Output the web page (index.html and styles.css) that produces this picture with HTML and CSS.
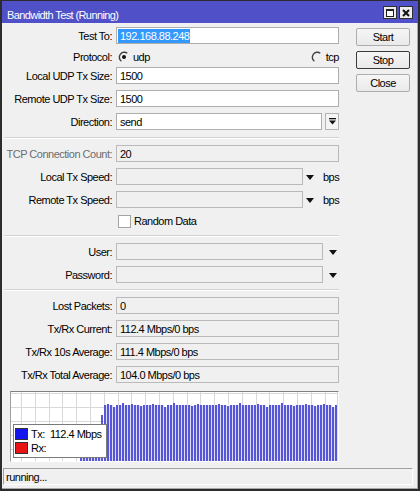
FILE: index.html
```
<!DOCTYPE html>
<html>
<head>
<meta charset="utf-8">
<link rel="stylesheet" href="styles.css">
</head>
<body>
<div class="window">
  <div class="titlebar">
    <span class="title">Bandwidth Test (Running)</span>
    <div class="tb-buttons">
      <span class="tb-btn"><span class="max-icon"></span></span>
      <span class="tb-btn"><svg width="8" height="8" viewBox="0 0 8 8"><path d="M1 1L7 7M7 1L1 7" stroke="#111" stroke-width="2"/></svg></span>
    </div>
  </div>
  <div class="main">
    <div class="form">
      <div class="row">
        <span class="lbl">Test To:</span>
        <div class="field"><div class="input sel-input"><span class="sel">192.168.88.248</span></div></div>
      </div>
      <div class="row proto">
        <span class="lbl">Protocol:</span>
        <div class="field spread">
          <span class="radio-group"><svg class="radio" width="12" height="12" viewBox="0 0 12 12"><path d="M9.3 2.2A5 5 0 1 0 3.4 10.3" fill="none" stroke="#404040" stroke-width="1.4"/><circle cx="6" cy="6" r="2" fill="#111"/></svg><span>udp</span></span>
          <span class="radio-group"><svg class="radio" width="12" height="12" viewBox="0 0 12 12"><path d="M9.3 2.2A5 5 0 1 0 3.4 10.3" fill="none" stroke="#404040" stroke-width="1.4"/></svg><span>tcp</span></span>
        </div>
      </div>
      <div class="row">
        <span class="lbl">Local UDP Tx Size:</span>
        <div class="field"><div class="input">1500</div></div>
      </div>
      <div class="row">
        <span class="lbl">Remote UDP Tx Size:</span>
        <div class="field"><div class="input">1500</div></div>
      </div>
      <div class="row">
        <span class="lbl">Direction:</span>
        <div class="field"><div class="input">send</div><span class="dd-btn"><svg width="7" height="7" viewBox="0 0 7 7"><rect x="0" y="0" width="7" height="1.3" fill="#111"/><path d="M0 2.5H7L3.5 6.5Z" fill="#111"/></svg></span></div>
      </div>
      <div class="sep sep-gap"></div>
      <div class="row">
        <span class="lbl dim">TCP Connection Count:</span>
        <div class="field"><div class="input ro">20</div></div>
      </div>
      <div class="row">
        <span class="lbl">Local Tx Speed:</span>
        <div class="field"><div class="input ro speed"></div><span class="tri tri-speed"></span><span class="unit">bps</span></div>
      </div>
      <div class="row">
        <span class="lbl">Remote Tx Speed:</span>
        <div class="field"><div class="input ro speed"></div><span class="tri tri-speed"></span><span class="unit">bps</span></div>
      </div>
      <div class="row check-row">
        <span class="lbl"></span>
        <div class="field"><span class="cb"></span><span class="cb-text">Random Data</span></div>
      </div>
      <div class="sep sep-gap"></div>
      <div class="row">
        <span class="lbl">User:</span>
        <div class="field"><div class="input ro user"></div><span class="tri tri-user"></span></div>
      </div>
      <div class="row">
        <span class="lbl">Password:</span>
        <div class="field"><div class="input ro user"></div><span class="tri tri-user"></span></div>
      </div>
      <div class="sep"></div>
      <div class="row">
        <span class="lbl">Lost Packets:</span>
        <div class="field"><div class="input ro">0</div></div>
      </div>
      <div class="row">
        <span class="lbl">Tx/Rx Current:</span>
        <div class="field"><div class="input ro">112.4 Mbps/0 bps</div></div>
      </div>
      <div class="row">
        <span class="lbl">Tx/Rx 10s Average:</span>
        <div class="field"><div class="input ro">111.4 Mbps/0 bps</div></div>
      </div>
      <div class="row">
        <span class="lbl">Tx/Rx Total Average:</span>
        <div class="field"><div class="input ro">104.0 Mbps/0 bps</div></div>
      </div>
      <div class="graph">
        <svg width="327" height="69" viewBox="0 0 327 69">
          <defs>
            <pattern id="bars" x="0" y="0" width="3" height="69" patternUnits="userSpaceOnUse">
              <rect x="0" y="0" width="2" height="69" fill="#5656d6"/>
              <rect x="2" y="0" width="1" height="69" fill="#dcdcf6"/>
            </pattern>
          </defs>
          <g stroke="#d8d8d8" stroke-width="1">
            <path d="M0 1.5H327M0 15.5H327M0 29.5H327M0 43.5H327M0 57.5H327"/>
            <path d="M10.5 0V69M24.5 0V69M38.5 0V69M51.5 0V69M65.5 0V69M79.5 0V69M93.5 0V69M107.5 0V69M120.5 0V69M134.5 0V69M148.5 0V69M162.5 0V69M176.5 0V69M189.5 0V69M203.5 0V69M217.5 0V69M231.5 0V69M245.5 0V69M258.5 0V69M272.5 0V69M286.5 0V69M300.5 0V69M314.5 0V69M326.5 0V69"/>
          </g>
          <rect x="69" y="66" width="21" height="3" fill="url(#bars)"/>
          <rect x="90" y="23" width="2" height="46" fill="#5656d6"/>
          <rect x="93" y="13" width="234" height="56" fill="url(#bars)"/>
          <g fill="#5656d6">
            <rect x="96" y="12" width="2" height="1"/>
            <rect x="111" y="11" width="2" height="2"/>
            <rect x="120" y="12" width="2" height="1"/>
            <rect x="141" y="12" width="2" height="1"/>
            <rect x="162" y="11" width="2" height="2"/>
            <rect x="186" y="12" width="2" height="1"/>
            <rect x="207" y="12" width="2" height="1"/>
            <rect x="228" y="11" width="2" height="2"/>
            <rect x="246" y="12" width="2" height="1"/>
            <rect x="270" y="11" width="2" height="2"/>
            <rect x="294" y="12" width="2" height="1"/>
            <rect x="312" y="12" width="2" height="1"/>
          </g>
          <g fill="#ffffff">
            <rect x="102" y="13" width="3" height="2"/>
            <rect x="129" y="13" width="3" height="1"/>
            <rect x="153" y="13" width="3" height="2"/>
            <rect x="180" y="13" width="3" height="1"/>
            <rect x="216" y="13" width="3" height="1"/>
            <rect x="255" y="13" width="3" height="2"/>
            <rect x="282" y="13" width="3" height="1"/>
            <rect x="303" y="13" width="3" height="1"/>
            <rect x="321" y="13" width="3" height="2"/>
          </g>
        </svg>
        <div class="legend">
          <div class="lg-row"><span class="sw sw-tx"></span><span class="lg-text">Tx:  112.4 Mbps</span></div>
          <div class="lg-row"><span class="sw sw-rx"></span><span class="lg-text">Rx:</span></div>
        </div>
      </div>
    </div>
    <div class="side">
      <div class="btn">Start</div>
      <div class="btn focus">Stop</div>
      <div class="btn">Close</div>
    </div>
  </div>
  <div class="status">running...</div>
</div>
</body>
</html>
```
FILE: styles.css
```
* { box-sizing: border-box; }
body {
  margin: 0;
  font-family: "Liberation Sans", Arial, sans-serif;
  font-size: 11px;
  letter-spacing: -0.5px;
  color: #000;
  background: #ffffff;
}
.window {
  width: 420px;
  height: 491px;
  background: #f0f0f0;
  border-style: solid;
  border-color: #2c2c2c;
  border-width: 1px 2px 2px 2px;
  box-shadow: inset -1px -1px 0 #a8a8a8;
  display: flex;
  flex-direction: column;
}
.titlebar {
  height: 22px;
  background: #5050c8;
  color: #fff;
  display: flex;
  align-items: center;
  justify-content: space-between;
  padding: 0 5px;
}
.title {
  padding-top: 5px;
  letter-spacing: -0.6px;
}
.tb-buttons {
  display: flex;
  gap: 2px;
  align-self: flex-start;
  margin-top: 5px;
}
.tb-btn {
  width: 14px;
  height: 13px;
  border: 1px solid #303030;
  background: #ececec;
  display: flex;
  align-items: center;
  justify-content: center;
}
.max-icon {
  width: 8px;
  height: 8px;
  border: 1px solid #202020;
  border-top-width: 2px;
  background: #fff;
}
.main {
  display: flex;
  padding-top: 4px;
}
.form {
  width: 337px;
  display: flex;
  flex-direction: column;
  gap: 6px;
}
.row {
  display: flex;
  align-items: center;
  height: 17px;
  white-space: nowrap;
}
.row.proto {
  height: 14px;
  margin-bottom: -3px;
}
.row.check-row {
  height: 14px;
}
.lbl {
  width: 110px;
  text-align: right;
}
.lbl.dim { color: #6d6d6d; }
.field {
  margin-left: 4px;
  width: 223px;
  height: 100%;
  display: flex;
  align-items: center;
}
.field.spread { justify-content: space-between; }
.input {
  height: 17px;
  flex: 1;
  border: 1px solid #aeaeae;
  background: #fff;
  padding-left: 3px;
  display: flex;
  align-items: center;
  white-space: nowrap;
  overflow: hidden;
}
.input.sel-input { padding-left: 1px; }
.sel {
  background: #3399ff;
  color: #fff;
  line-height: 14px;
  padding: 0 1px 0 2px;
}
.input.ro {
  background: #f0f0f0;
  border-color: #bababa;
}
.input.speed { flex: 0 0 187px; }
.input.user { flex: 0 0 207px; }
.radio-group {
  display: flex;
  align-items: center;
  gap: 3px;
}
.radio-group:first-child { margin-left: 2px; }
.radio { display: block; }
.dd-btn {
  width: 14px;
  height: 17px;
  margin-left: 3px;
  border: 1px solid #b4b4b4;
  background: #f4f4f4;
  display: flex;
  align-items: center;
  justify-content: center;
}
.dd-btn svg { display: block; }
.tri {
  width: 0;
  height: 0;
  border-left: 4px solid transparent;
  border-right: 4px solid transparent;
  border-top: 5px solid #111;
  margin-top: 1px;
}
.tri-speed { margin-left: 3px; }
.tri-user { margin-left: 6px; }
.unit { margin-left: 9px; }
.cb {
  width: 13px;
  height: 13px;
  margin-left: 2px;
  background: #fff;
  border: 1px solid #a4a4a4;
}
.cb-text { margin-left: 3px; }
.sep {
  height: 2px;
  margin-left: 2px;
  border-top: 1px solid #d2d2d2;
  border-bottom: 1px solid #ffffff;
}
.sep.sep-gap { margin-top: 1px; }
.graph {
  position: relative;
  margin-top: 2px;
  margin-left: 8px;
  width: 329px;
  height: 71px;
  border: 1px solid;
  border-color: #808080 #ffffff #ffffff #a0a0a0;
  background: #fff;
}
.graph svg { display: block; }
.legend {
  position: absolute;
  left: 2px;
  top: 32px;
  width: 94px;
  height: 34px;
  border: 1px solid #7a7a7a;
  background: #fff;
  padding: 3px 1px;
  display: flex;
  flex-direction: column;
  gap: 2px;
}
.lg-row {
  display: flex;
  align-items: center;
  height: 12px;
}
.sw {
  width: 13px;
  height: 12px;
  border: 1px solid #303030;
  flex: none;
}
.sw-tx { background: #1414f0; }
.sw-rx { background: #e81414; }
.lg-text {
  margin-left: 3px;
  white-space: pre;
}
.side {
  margin-left: 17px;
  padding-top: 1px;
  display: flex;
  flex-direction: column;
  gap: 5px;
}
.btn {
  width: 54px;
  height: 18px;
  border: 1px solid #adadad;
  border-radius: 2px;
  background: linear-gradient(#f6f6f6, #e9e9e9);
  display: flex;
  align-items: center;
  justify-content: center;
}
.btn.focus { border-color: #3a3a3a; }
.status {
  margin: 6px 0 0 1px;
  width: 410px;
  height: 17px;
  border: 1px solid;
  border-color: #a0a0a0 #ffffff #ffffff #a0a0a0;
  padding-left: 2px;
  display: flex;
  align-items: center;
}
```
